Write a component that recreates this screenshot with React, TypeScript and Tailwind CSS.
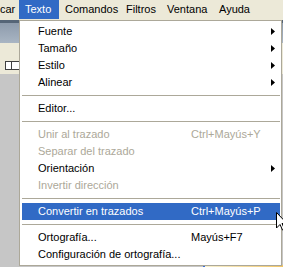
import React from 'react';

type Item =
  | { kind: 'sep' }
  | { kind: 'item'; label: string; shortcut?: string; sub?: boolean; disabled?: boolean; active?: boolean };

const items: Item[] = [
  { kind: 'item', label: 'Fuente', sub: true },
  { kind: 'item', label: 'Tamaño', sub: true },
  { kind: 'item', label: 'Estilo', sub: true },
  { kind: 'item', label: 'Alinear', sub: true },
  { kind: 'sep' },
  { kind: 'item', label: 'Editor...' },
  { kind: 'sep' },
  { kind: 'item', label: 'Unir al trazado', shortcut: 'Ctrl+Mayús+Y', disabled: true },
  { kind: 'item', label: 'Separar del trazado', disabled: true },
  { kind: 'item', label: 'Orientación', sub: true },
  { kind: 'item', label: 'Invertir dirección', disabled: true },
  { kind: 'sep' },
  { kind: 'item', label: 'Convertir en trazados', shortcut: 'Ctrl+Mayús+P', active: true },
  { kind: 'sep' },
  { kind: 'item', label: 'Ortografía...', shortcut: 'Mayús+F7' },
  { kind: 'item', label: 'Configuración de ortografía...' },
];

const menubar = [
  { label: 'car', w: 'w-[19px]', pad: 'pl-0' },
  { label: 'Texto', w: 'w-[40px]', pad: 'pl-[6px]', open: true },
  { label: 'Comandos', w: 'w-[61px]', pad: 'pl-[6px]' },
  { label: 'Filtros', w: 'w-[41px]', pad: 'pl-[6px]' },
  { label: 'Ventana', w: 'w-[52px]', pad: 'pl-[6px]' },
  { label: 'Ayuda', w: 'w-[50px]', pad: 'pl-[6px]' },
];

function Arrow({ white }: { white?: boolean }) {
  return (
    <svg width="4" height="7" viewBox="0 0 4 7" className="block">
      <path d="M0 0 L4 3.5 L0 7 Z" fill={white ? '#ffffff' : '#000000'} />
    </svg>
  );
}

export default function App() {
  return (
    <div
      className="relative h-[267px] w-[283px] overflow-hidden bg-[#ece9d8] text-[11px] text-black"
      style={{ fontFamily: '"Liberation Sans", Arial, sans-serif' }}
    >
      {/* Menu bar */}
      <div className="flex h-[20px] bg-[#ece9d8]">
        {menubar.map((m) => (
          <div
            key={m.label}
            className={`flex h-[19px] shrink-0 items-center ${m.w} ${m.pad} ${
              m.open ? 'bg-[#316ac5] text-white' : ''
            }`}
          >
            {m.label}
          </div>
        ))}
      </div>

      {/* Workspace behind the menu */}
      <div className="flex h-[245px] flex-col">
        <div className="h-[3px] bg-[#556577]" />
        <div className="h-[20px] bg-gradient-to-b from-[#8d9bac] to-[#a9b5c3]" />
        <div className="flex h-[31px] items-center bg-[#ece9d8] pl-[5px] pt-[14px]">
          <div className="flex h-[9px] w-[16px] border border-[#404040] bg-white">
            <div className="w-[6px] border-r border-[#404040]" />
          </div>
        </div>
        <div className="flex-1 bg-[#c6c6c6]" />
      </div>
      <div className="flex h-[2px]">
        <div className="w-[203px] bg-[#c6c6c6]" />
        <div className="w-[2px] bg-[#3a6fd8]" />
        <div className="flex-1 bg-gradient-to-r from-[#f6f0d0] to-[#f3c764]" />
      </div>

      {/* Dropdown */}
      <div className="absolute left-[19px] top-[20px] w-[263px] border border-[#aca899] bg-white p-[2px] pr-[1px]">
        {items.map((it, i) =>
          it.kind === 'sep' ? (
            <div key={i} className="flex h-[9px] items-center">
              <div className="h-px w-full bg-[#aca899]" />
            </div>
          ) : (
            <div
              key={i}
              className={`flex h-[17px] items-center pl-[16px] pr-[5px] ${
                it.active ? 'bg-[#316ac5] text-white' : it.disabled ? 'text-[#aca899]' : 'text-black'
              }`}
            >
              <span className="w-[153px] shrink-0 whitespace-nowrap">{it.label}</span>
              {it.shortcut && <span className="whitespace-nowrap">{it.shortcut}</span>}
              {it.sub && (
                <span className="ml-auto">
                  <Arrow white={it.active} />
                </span>
              )}
            </div>
          ),
        )}
      </div>

      {/* Mouse pointer */}
      <svg width="12" height="19" viewBox="0 0 12 19" className="absolute left-[276px] top-[212px]">
        <path
          d="M0.5 0.5 L0.5 16 L4 12.5 L6.5 18 L8.5 17 L6 11.5 L11 11.5 Z"
          fill="#ffffff"
          stroke="#000000"
          strokeWidth="1"
        />
      </svg>
    </div>
  );
}
